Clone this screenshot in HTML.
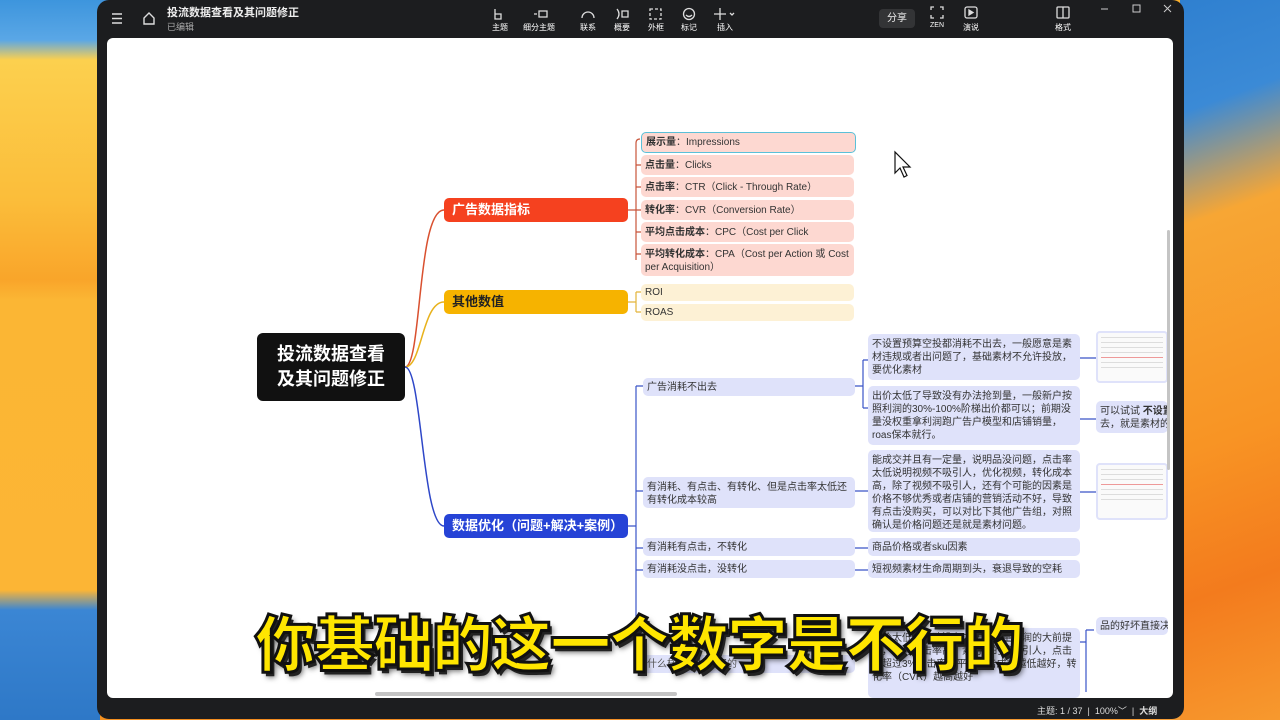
<!DOCTYPE html>
<html><head><meta charset="utf-8"><style>
*{margin:0;padding:0;box-sizing:border-box}
body{width:1280px;height:720px;overflow:hidden;position:relative;font-family:"Liberation Sans","Noto Sans CJK SC",sans-serif;
background:linear-gradient(160deg,#3a8fd8 0%,#4a9ae0 8%,#fbc944 14%,#f9a626 45%,#f28a1f 70%,#f7a03a 100%)}
.abs{position:absolute}
#lw{left:0;top:0;width:100px;height:720px;background:linear-gradient(180deg,#3d95dd 0,#5aa7e6 40px,#fcd04e 60px,#fbbd3a 200px,#f9a52a 280px,#fbb634 300px,#fcb535 590px,#3b86d4 610px,#2e78c7 720px)}
#rw{left:1180px;top:0;width:100px;height:720px;background:linear-gradient(160deg,#2f80d0 0,#3b8ad6 15%,#f7a634 30%,#f89424 60%,#f37b1d 80%,#f7992e 100%)}
#win{left:97px;top:0;width:1087px;height:719px;background:#1c1d1f;border-radius:12px}
#canvas{left:107px;top:38px;width:1066px;height:660px;background:#fff;border-radius:6px;overflow:hidden}
.t{color:#fff;font-size:8px;text-align:center}
.node{position:absolute;border-radius:5px;font-size:10px;color:#333;padding:4px 3px 2px 4px;line-height:13px}
.red{background:#fdd8d1}.yel{background:#fdf1d5}.blu{background:#dfe2fa}
.br{position:absolute;border-radius:5px;font-size:13px;font-weight:bold;padding:4px 8px;line-height:16px}
b{font-weight:bold}
.thumb{position:absolute;background:#fafafa;border:2px solid #dfe2fa;border-radius:4px}
.thumb i{display:block;height:1px;background:#ddd;margin:4px 3px}
#sub{left:255px;top:600px;font-size:61px;font-weight:900;color:#ffe600;font-family:"Noto Sans CJK SC","WenQuanYi Zen Hei",sans-serif;letter-spacing:-2px;-webkit-text-stroke:3px #111;text-shadow:3px 4px 0 #222,4px 5px 6px rgba(0,0,0,.6);white-space:nowrap;line-height:80px}
</style></head><body>
<div id="lw" class="abs"></div><div id="rw" class="abs"></div>
<div id="win" class="abs"></div>
<svg class="abs" style="left:110px;top:10px" width="50" height="18"><g stroke="#ddd" stroke-width="1.4" fill="none"><path d="M2 4h10M2 8.5h10M2 13h10"/><path d="M34 8l5-5 5 5v6h-10z"/></g></svg>
<div class="abs" style="left:167px;top:4px;color:#eee;font-size:11px;font-weight:bold">投流数据查看及其问题修正</div>
<div class="abs" style="left:167px;top:20px;color:#aaa;font-size:9px">已编辑</div>
<svg class="abs" style="left:490px;top:6px" width="250" height="16"><g stroke="#ddd" stroke-width="1.3" fill="none">
<path d="M5 3v5h6v5H5z"/><path d="M44 8h3M49 5h8v6h-8z"/><path d="M92 12a6 6 0 0 1 12 0"/><path d="M127 3q4 5 0 10M132 5h6v6h-6z"/><rect x="160" y="3" width="11" height="10" stroke-dasharray="3 2"/><circle cx="199" cy="8" r="5.5"/><path d="M196 9q3 3 6 0"/><path d="M230 2v12M224 8h12M240 7l2 2 2-2"/></g></svg>
<div class="abs t" style="left:490px;top:22px;width:20px">主题</div>
<div class="abs t" style="left:520px;top:22px;width:38px">细分主题</div>
<div class="abs t" style="left:578px;top:22px;width:20px">联系</div>
<div class="abs t" style="left:612px;top:22px;width:20px">概要</div>
<div class="abs t" style="left:646px;top:22px;width:20px">外框</div>
<div class="abs t" style="left:679px;top:22px;width:20px">标记</div>
<div class="abs t" style="left:715px;top:22px;width:20px">插入</div>
<div class="abs" style="left:879px;top:9px;width:36px;height:19px;background:#333436;border-radius:4px;color:#eee;font-size:10px;text-align:center;line-height:19px">分享</div>
<svg class="abs" style="left:930px;top:6px" width="150" height="14"><g stroke="#ddd" stroke-width="1.3" fill="none"><path d="M1 4V1h3M10 1h3v3M13 9v3h-3M4 12H1V9"/><rect x="35" y="1" width="12" height="11" rx="2"/><path d="M39 4l4 2.5-4 2.5z" fill="#ddd"/><rect x="127" y="1" width="12" height="11" rx="1"/><path d="M133 1v11"/></g></svg>
<div class="abs t" style="left:927px;top:22px;width:20px;font-size:7px">ZEN</div>
<div class="abs t" style="left:961px;top:22px;width:20px">演说</div>
<div class="abs t" style="left:1053px;top:22px;width:20px">格式</div>
<svg class="abs" style="left:1098px;top:4px" width="76" height="12"><g stroke="#ccc" stroke-width="1" fill="none"><path d="M3 5h7"/><rect x="35" y="1" width="7" height="7"/><path d="M66 1l7 7M73 1l-7 7"/></g></svg>
<div id="canvas" class="abs">
<svg class="abs" style="left:0;top:0" width="1066" height="660"><g fill="none" stroke-width="1.5">
<path d="M298 329 C315 329 310 172 337 172" stroke="#d9502f"/>
<path d="M298 329 C315 329 315 264 337 264" stroke="#e8b21c"/>
<path d="M298 329 C315 329 315 488 337 488" stroke="#2e47c8"/>
<g stroke="#c8553a" stroke-width="1.2"><path d="M521 172h8M529 105v117M529 105q0 -4 4 -4M529 127h5M529 149h5M529 172h5M529 194h5M529 216h5"/></g>
<g stroke="#e3b53a" stroke-width="1.2"><path d="M521 264h8M529 254v20M529 254h5M529 274h5"/></g>
<g stroke="#3a55c8" stroke-width="1.2"><path d="M521 488h8M529 348v232M529 348h7M529 453h7M529 510h7M529 532h7M529 620h7"/>
<path d="M748 348h8M756 322v48M756 322h5M756 370h5M973 320h16M973 381h16M973 454h16M748 453h15M748 510h15M748 532h15M973 604h6M979 604v50M979 592v12M979 592h8"/></g>
</g></svg>
<div class="abs" style="left:150px;top:295px;width:148px;height:68px;background:#111;border-radius:6px;color:#fff;font-size:18px;font-weight:bold;text-align:center;line-height:25px;padding-top:9px">投流数据查看<br>及其问题修正</div>
<div class="br" style="left:337px;top:160px;width:184px;height:24px;background:#f5411f;color:#fff">广告数据指标</div>
<div class="br" style="left:337px;top:252px;width:184px;height:24px;background:#f6b300;color:#222">其他数值</div>
<div class="br" style="left:337px;top:476px;width:184px;height:24px;background:#2643d6;color:#fff">数据优化（问题+解决+案例）</div>
<div class="node red" style="left:534px;top:94px;width:215px;height:21px;border:1.5px solid #5bc0d8;padding-top:3px"><b>展示量</b>：Impressions</div>
<div class="node red" style="left:534px;top:117px;width:213px;height:20px"><b>点击量</b>：Clicks</div>
<div class="node red" style="left:534px;top:139px;width:213px;height:20px"><b>点击率</b>：CTR（Click - Through Rate）</div>
<div class="node red" style="left:534px;top:162px;width:213px;height:20px"><b>转化率</b>：CVR（Conversion Rate）</div>
<div class="node red" style="left:534px;top:184px;width:213px;height:20px"><b>平均点击成本</b>：CPC（Cost per Click</div>
<div class="node red" style="left:534px;top:206px;width:213px;height:32px"><b>平均转化成本</b>：CPA（Cost per Action 或 Cost per Acquisition）</div>
<div class="node yel" style="left:534px;top:246px;width:213px;height:17px;padding-top:2px">ROI</div>
<div class="node yel" style="left:534px;top:266px;width:213px;height:17px;padding-top:2px">ROAS</div>
<div class="node blu" style="left:536px;top:340px;width:212px;height:18px;padding-top:3px">广告消耗不出去</div>
<div class="node blu" style="left:536px;top:439px;width:212px;height:31px">有消耗、有点击、有转化、但是点击率太低还有转化成本较高</div>
<div class="node blu" style="left:536px;top:500px;width:212px;height:18px;padding-top:3px">有消耗有点击，不转化</div>
<div class="node blu" style="left:536px;top:522px;width:212px;height:18px;padding-top:3px">有消耗没点击，没转化</div>
<div class="node blu" style="left:536px;top:617px;width:212px;height:18px;color:#555;padding-top:3px">什么样的素材是好的</div>
<div class="node blu" style="left:761px;top:296px;width:212px;height:46px">不设置预算空投都消耗不出去，一般愿意是素材违规或者出问题了，基础素材不允许投放，要优化素材</div>
<div class="node blu" style="left:761px;top:348px;width:212px;height:59px">出价太低了导致没有办法抢到量，一般新户按照利润的30%-100%阶梯出价都可以；前期没量没权重拿利润跑广告户模型和店铺销量，roas保本就行。</div>
<div class="node blu" style="left:761px;top:412px;width:212px;height:82px">能成交并且有一定量，说明品没问题，点击率太低说明视频不吸引人，优化视频，转化成本高，除了视频不吸引人，还有个可能的因素是价格不够优秀或者店铺的营销活动不好，导致有点击没购买，可以对比下其他广告组，对照确认是价格问题还是就是素材问题。</div>
<div class="node blu" style="left:761px;top:500px;width:212px;height:18px;padding-top:3px">商品价格或者sku因素</div>
<div class="node blu" style="left:761px;top:522px;width:212px;height:18px;padding-top:3px">短视频素材生命周期到头，衰退导致的空耗</div>
<div class="node blu" style="left:761px;top:590px;width:212px;height:70px">出价太低了导致没有办法抢到量利润的大前提下，素材点击率高，素材做的够吸引人，点击率超过3%点击率，平均点击成本越低越好，转化率（CVR）越高越好</div>
<div class="thumb" style="left:989px;top:293px;width:72px;height:52px"><i></i><i></i><i></i><i></i><i style="background:#e99"></i><i></i><i></i></div>
<div class="node blu" style="left:989px;top:363px;width:72px;height:32px;white-space:nowrap;overflow:hidden">可以试试 <b>不设置</b><br>去，就是素材的</div>
<div class="thumb" style="left:989px;top:425px;width:72px;height:57px"><i></i><i></i><i></i><i style="background:#e99"></i><i></i><i></i><i></i></div>
<div class="node blu" style="left:989px;top:579px;width:72px;height:18px;white-space:nowrap;overflow:hidden;padding-top:3px">品的好坏直接决</div>
<div class="abs" style="left:1060px;top:192px;width:3px;height:240px;background:#c4c4c4;border-radius:2px"></div>
<div class="abs" style="left:268px;top:654px;width:302px;height:4px;background:#c4c4c4;border-radius:2px"></div>
</div>
<svg class="abs" style="left:893px;top:150px" width="20" height="30"><path d="M2 2v21l5-5 4 9 3-1.5-4-8.5h7z" fill="#fff" stroke="#111" stroke-width="1.2"/></svg>
<div id="sub" class="abs">你基础的这一个数字是不行的</div>
<div class="abs" style="left:1037px;top:704px;color:#ddd;font-size:9px;white-space:nowrap">主题: 1 / 37 &nbsp;|&nbsp; 100%﹀ &nbsp;|&nbsp; <b>大纲</b></div>
</body></html>
